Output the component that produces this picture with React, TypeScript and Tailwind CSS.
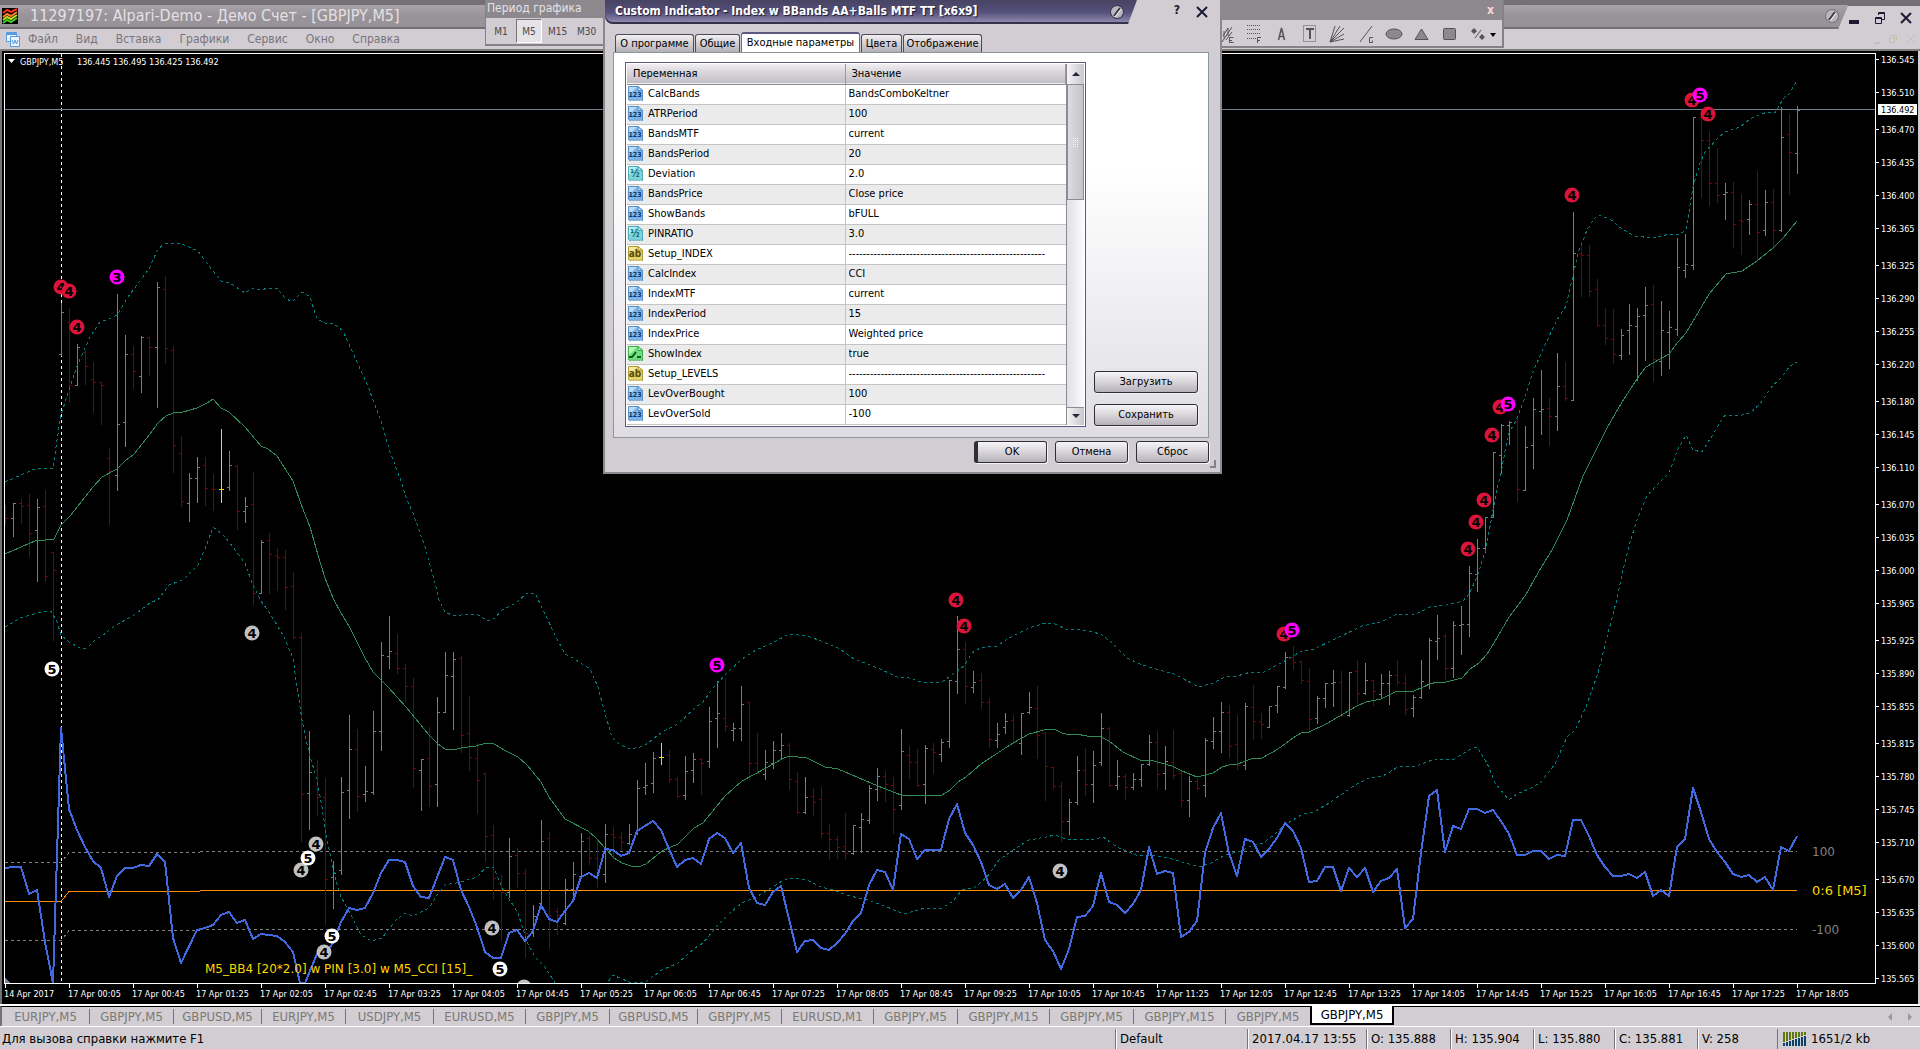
import React from "react";

// [high, low, open, close] for every bar, 8px apart
const BARS = [
  [505, 524, 515, 518], [503, 536, 518, 503], [499, 523, 503, 506], [494, 556, 505, 533], [499, 581, 530, 507],
  [490, 581, 506, 576], [552, 640, 552, 570], [303, 355, 354, 312], [308, 402, 322, 385], [344, 385, 385, 347],
  [350, 384, 352, 366], [362, 412, 379, 382], [382, 424, 382, 385], [448, 524, 458, 471], [294, 490, 475, 424],
  [335, 446, 422, 354], [346, 388, 354, 371], [336, 392, 376, 337], [337, 375, 337, 347], [282, 407, 347, 287],
  [276, 363, 289, 348], [346, 472, 350, 445], [436, 506, 453, 501], [473, 521, 503, 478], [457, 502, 478, 467],
  [457, 505, 465, 488], [474, 510, 489, 489], [429, 502, 489, 489], [451, 490, 487, 465], [465, 529, 466, 511],
  [497, 522, 511, 506], [472, 604, 504, 593], [540, 593, 593, 542], [533, 593, 540, 554], [548, 590, 555, 557],
  [550, 609, 557, 587], [572, 638, 586, 637], [633, 841, 637, 794], [731, 829, 793, 772], [760, 815, 770, 797],
  [778, 924, 797, 879], [861, 908, 877, 873], [777, 874, 870, 792], [715, 818, 790, 749], [729, 811, 749, 796],
  [766, 801, 794, 791], [711, 794, 792, 731], [642, 750, 731, 655], [616, 668, 656, 651], [634, 673, 653, 668],
  [664, 701, 668, 686], [678, 787, 686, 768], [759, 810, 770, 759], [727, 806, 758, 786], [697, 806, 784, 712],
  [652, 712, 712, 675], [652, 729, 676, 659], [656, 752, 658, 735], [696, 770, 733, 757], [743, 813, 758, 780],
  [773, 861, 773, 836], [825, 899, 835, 878], [875, 940, 882, 892], [838, 897, 892, 856], [848, 887, 855, 873],
  [869, 957, 873, 933], [905, 936, 933, 916], [820, 908, 903, 841], [832, 948, 838, 915], [908, 934, 911, 915],
  [879, 924, 923, 889], [862, 900, 889, 874], [833, 877, 876, 841], [836, 864, 838, 858], [839, 887, 858, 874],
  [824, 882, 874, 834], [827, 858, 834, 837], [832, 849, 837, 842], [824, 844, 843, 834], [780, 834, 834, 788],
  [763, 794, 787, 785], [752, 792, 783, 758], [743, 764, 757, 757], [750, 782, 755, 779], [777, 797, 779, 796],
  [756, 799, 795, 771], [753, 782, 770, 759], [758, 794, 759, 763], [707, 767, 761, 721], [681, 747, 718, 713],
  [678, 731, 718, 726], [723, 740, 730, 728], [686, 740, 728, 704], [702, 779, 702, 763], [733, 773, 763, 773],
  [750, 779, 774, 762], [741, 768, 763, 750], [733, 759, 750, 745], [743, 789, 745, 779], [772, 813, 781, 812],
  [777, 813, 812, 797], [788, 815, 796, 802], [787, 837, 799, 833], [824, 859, 833, 839], [836, 858, 839, 847],
  [813, 859, 846, 853], [825, 854, 853, 825], [813, 852, 827, 819], [785, 823, 820, 788], [768, 800, 789, 776],
  [771, 801, 776, 784], [777, 833, 785, 809], [729, 809, 805, 751], [746, 778, 755, 762], [749, 786, 762, 785],
  [745, 803, 784, 748], [743, 773, 749, 752], [739, 761, 754, 742], [680, 747, 741, 680], [616, 693, 681, 649],
  [642, 703, 649, 686], [671, 692, 687, 682], [673, 708, 680, 702], [698, 747, 702, 739], [723, 747, 740, 734],
  [713, 733, 727, 721], [715, 743, 720, 742], [713, 754, 743, 713], [692, 713, 712, 707], [686, 758, 708, 735],
  [732, 800, 733, 766], [767, 788, 767, 786], [782, 841, 786, 821], [799, 834, 821, 802], [756, 804, 802, 770],
  [748, 795, 770, 784], [751, 802, 784, 765], [713, 765, 762, 728], [727, 786, 728, 785], [760, 789, 785, 776],
  [774, 799, 776, 787], [773, 789, 787, 779], [764, 786, 779, 764], [735, 765, 764, 742], [731, 788, 742, 774],
  [746, 789, 773, 761], [730, 778, 762, 775], [771, 806, 773, 800], [776, 816, 800, 781], [778, 789, 781, 788],
  [738, 796, 785, 740], [717, 748, 741, 731], [702, 752, 731, 712], [705, 757, 712, 746], [715, 769, 744, 765],
  [703, 769, 765, 706], [685, 739, 707, 721], [713, 738, 721, 724], [706, 727, 727, 706], [686, 712, 705, 686],
  [652, 688, 687, 657], [646, 669, 657, 662], [661, 683, 661, 680], [668, 732, 681, 719], [696, 723, 718, 698],
  [683, 707, 698, 683], [670, 706, 683, 682], [671, 716, 682, 715], [672, 716, 715, 672], [660, 704, 671, 693],
  [663, 694, 693, 680], [680, 705, 680, 691], [674, 698, 694, 683], [671, 704, 683, 675], [660, 684, 675, 682],
  [675, 714, 683, 709], [695, 716, 708, 697], [660, 698, 697, 681], [638, 688, 684, 640], [615, 659, 641, 638],
  [634, 679, 636, 668], [621, 677, 668, 625], [606, 654, 625, 624], [566, 636, 624, 573], [539, 591, 574, 548],
  [517, 552, 548, 517], [452, 517, 517, 452], [424, 473, 455, 425], [421, 444, 425, 422], [417, 501, 422, 489],
  [426, 490, 490, 447], [398, 468, 445, 409], [370, 434, 411, 409], [398, 445, 408, 416], [353, 430, 416, 386],
  [362, 400, 386, 398], [212, 400, 400, 253], [242, 296, 253, 255], [245, 296, 255, 291], [279, 325, 289, 325],
  [308, 344, 325, 338], [309, 363, 339, 354], [329, 359, 355, 335], [304, 354, 330, 325], [308, 380, 326, 316],
  [287, 360, 315, 305], [285, 381, 304, 359], [301, 375, 361, 330], [311, 368, 332, 327], [238, 335, 329, 267],
  [234, 277, 270, 264], [117, 269, 265, 117], [112, 197, 117, 140], [131, 205, 140, 183], [148, 202, 183, 195],
  [183, 219, 194, 192], [182, 247, 192, 224], [194, 254, 220, 221], [200, 234, 219, 204], [171, 259, 204, 232],
  [190, 235, 230, 202], [189, 248, 202, 230], [107, 231, 230, 137], [114, 194, 134, 152], [106, 173, 153, 110],
];

const PIN_BARS = [27, 82];

const UPPER_BAND =
  "5,482 37,468 53,469 57,440 61,415 69,390 77,366 90,337 100,322 109,319 117,315 128,297 140,281 149,269 157,251 163,244 168,243 182,244 198,251 213,271 221,281 230,283 245,293 252,288 262,290 267,288 277,288 285,298 292,302 302,292 310,297 317,319 327,324 333,323 343,331 353,353 367,384 380,418 390,452 400,478 407,500 413,513 425,547 435,583 439,600 445,612 454,616 469,614 478,615 488,621 495,618 502,610 516,603 527,593 535,593 543,610 555,635 565,654 573,658 590,669 598,687 604,710 612,737 620,745 631,749 644,746 662,732 678,724 695,708 703,702 713,688 727,673 742,659 756,650 772,643 789,634 807,636 821,641 838,648 854,659 878,668 897,677 909,678 921,682 940,683 952,675 964,666 972,653 980,648 997,646 1011,637 1029,628 1046,623 1055,624 1068,630 1078,629 1101,634 1111,642 1127,658 1142,665 1174,674 1199,687 1213,683 1225,677 1237,676 1251,672 1264,672 1281,663 1300,652 1314,649 1333,640 1362,626 1381,622 1397,614 1414,615 1430,607 1447,605 1463,601 1469,594 1477,577 1486,549 1491,521 1496,494 1502,468 1508,435 1517,418 1525,397 1533,372 1543,349 1557,320 1566,306 1572,280 1578,253 1587,230 1593,220 1598,215 1610,219 1622,229 1635,236 1652,238 1670,234 1678,235 1686,230 1693,187 1700,163 1705,152 1717,139 1725,132 1740,127 1750,119 1767,112 1775,113 1783,99 1790,93 1797,80";

const LOWER_BAND =
  "5,627 20,618 37,613 51,611 57,622 61,635 69,642 80,648 87,648 96,639 102,636 114,626 133,616 151,602 158,600 169,585 183,580 198,565 207,544 213,527 222,534 230,543 245,563 252,583 261,601 271,615 284,637 293,658 297,687 302,720 309,753 317,780 322,807 327,840 335,877 341,897 351,915 361,935 372,941 382,938 396,920 405,913 413,916 429,908 437,895 445,885 461,882 477,877 486,867 494,868 502,888 518,913 527,942 535,957 545,967 557,986 605,986 613,975 629,982 644,983 662,970 678,963 695,948 703,943 717,926 731,912 742,903 756,897 768,890 782,881 791,878 807,880 821,887 833,890 850,896 868,900 887,907 904,914 925,908 942,908 952,902 962,890 974,888 987,877 999,860 1013,850 1029,840 1046,837 1055,835 1066,839 1091,840 1103,837 1117,847 1136,855 1152,855 1172,859 1199,867 1211,863 1225,855 1241,851 1253,845 1263,843 1274,835 1286,824 1303,814 1314,812 1326,805 1355,785 1369,778 1383,776 1398,767 1416,766 1435,759 1454,759 1469,750 1477,747 1487,763 1495,783 1509,800 1517,794 1529,789 1541,782 1555,764 1567,737 1575,730 1586,707 1598,673 1607,637 1617,599 1623,570 1630,542 1637,520 1647,496 1657,485 1669,473 1678,449 1686,435 1693,450 1702,452 1710,439 1725,415 1742,415 1750,413 1760,404 1773,385 1780,379 1790,366 1797,362";

const MIDDLE_BAND =
  "5,554 37,540 45,540 54,539 61,525 70,516 93,487 102,477 117,469 125,461 134,454 150,434 158,423 166,416 173,413 183,412 197,408 207,403 213,399 221,408 229,412 245,427 261,446 268,449 277,456 293,481 301,504 310,527 318,555 325,578 333,598 341,613 349,626 365,658 373,672 388,687 406,707 429,735 438,744 445,749 453,750 461,748 476,746 486,743 494,744 506,751 518,757 527,765 541,782 549,797 565,819 588,831 596,838 606,849 614,858 622,863 631,866 638,867 646,864 662,851 678,844 694,828 703,823 725,796 742,781 766,768 782,759 789,756 807,758 825,767 838,769 878,786 901,795 918,796 925,795 942,795 950,790 958,782 966,777 981,764 1013,743 1029,734 1044,730 1054,729 1062,733 1070,735 1076,734 1087,736 1101,737 1109,741 1123,752 1140,760 1150,760 1172,766 1182,771 1197,777 1213,773 1222,767 1229,765 1238,764 1251,759 1262,758 1278,749 1293,738 1301,733 1309,732 1326,724 1357,706 1366,702 1381,699 1397,691 1414,691 1430,684 1437,682 1446,682 1462,678 1470,669 1479,663 1487,654 1494,643 1509,617 1525,596 1542,566 1552,550 1567,520 1583,476 1607,428 1622,402 1637,379 1646,367 1669,354 1678,342 1686,333 1702,306 1709,294 1726,274 1742,271 1757,261 1773,248 1783,238 1797,221";

const CCI =
  "5,868 13,867 21,867 29,894 37,890 45,942 53,983 61,728 69,809 77,830 85,847 93,861 101,868 109,897 117,876 125,868 133,868 141,865 149,866 157,854 165,862 173,938 181,963 197,930 205,928 213,925 221,915 229,912 237,923 245,920 253,939 261,934 277,936 285,942 293,952 300,983 305,983 317,954 325,954 333,943 341,922 349,908 357,910 365,908 373,893 381,873 389,860 397,860 405,862 413,886 421,897 429,898 445,857 453,860 461,890 469,907 477,927 485,952 493,958 501,958 509,933 517,930 525,941 533,931 541,905 549,919 557,922 565,911 573,901 581,877 589,873 597,878 605,849 613,850 621,856 629,853 637,831 653,821 661,830 669,849 677,867 685,860 693,858 701,864 709,839 717,833 725,838 733,853 741,843 749,888 757,903 765,905 773,892 781,886 797,952 805,941 813,940 821,948 829,950 837,943 845,934 853,921 861,913 869,885 877,870 885,872 893,890 901,834 909,839 917,859 925,850 941,850 949,819 957,804 965,833 973,845 981,862 989,885 997,889 1005,884 1013,898 1021,890 1029,877 1037,903 1045,940 1053,951 1061,969 1069,949 1077,917 1085,916 1093,906 1101,873 1109,902 1117,905 1125,913 1133,904 1141,890 1149,847 1157,874 1165,871 1173,873 1181,937 1189,932 1197,921 1205,853 1213,828 1221,813 1229,853 1237,876 1245,839 1253,842 1261,857 1269,849 1277,838 1285,823 1293,831 1301,848 1309,882 1317,881 1325,867 1333,867 1341,891 1349,868 1357,877 1365,868 1373,892 1381,881 1389,878 1397,869 1405,928 1413,919 1421,853 1429,796 1437,790 1445,852 1453,826 1461,829 1469,809 1477,809 1485,813 1493,810 1501,821 1509,834 1517,855 1525,855 1533,851 1541,851 1549,859 1557,855 1565,856 1573,820 1581,820 1589,836 1597,855 1605,867 1613,876 1621,876 1629,874 1637,878 1645,872 1653,896 1661,890 1669,896 1677,847 1685,839 1693,788 1701,812 1709,839 1717,852 1725,862 1733,874 1741,877 1749,875 1757,882 1765,877 1773,890 1781,847 1789,851 1797,836";

const PRICES: [string, number][] = [
  ["136.545", 59], ["136.510", 92], ["136.470", 129], ["136.435", 162], ["136.400", 195], ["136.365", 228],
  ["136.325", 265], ["136.290", 298], ["136.255", 331], ["136.220", 364], ["136.180", 401], ["136.145", 434],
  ["136.110", 467], ["136.070", 504], ["136.035", 537], ["136.000", 570], ["135.965", 603], ["135.925", 640],
  ["135.890", 673], ["135.855", 706], ["135.815", 743], ["135.780", 776], ["135.745", 809], ["135.710", 842],
  ["135.670", 879], ["135.635", 912], ["135.600", 945], ["135.565", 978],
];

const RED = "#dc143c";
const MAGENTA = "#ff00ff";
const SILVER = "#c0c0c0";
const WHITE = "#ffffff";

const BALLS: [number, number, string, string][] = [
  [61, 287, "4", RED], [69, 291, "4", RED], [77, 327, "4", RED], [117, 277, "3", MAGENTA],
  [252, 633, "4", SILVER], [52, 669, "5", WHITE], [316, 844, "4", SILVER], [301, 870, "4", SILVER],
  [308, 858, "5", WHITE], [324, 952, "4", SILVER], [332, 936, "5", WHITE], [492, 928, "4", SILVER],
  [500, 969, "5", WHITE], [524, 987, "4", SILVER], [717, 665, "5", MAGENTA], [956, 600, "4", RED],
  [964, 626, "4", RED], [1060, 871, "4", SILVER], [1284, 634, "4", RED], [1292, 630, "5", MAGENTA],
  [1468, 549, "4", RED], [1476, 522, "4", RED], [1484, 500, "4", RED], [1492, 435, "4", RED],
  [1500, 407, "4", RED], [1508, 404, "5", MAGENTA], [1572, 195, "4", RED], [1692, 100, "4", RED],
  [1700, 95, "5", MAGENTA], [1708, 114, "4", RED],
];

const TIMES = Array.from({ length: 28 }, (_, k) => {
  const m = 5 + 40 * k;
  const hh = String(Math.floor(m / 60)).padStart(2, "0");
  const mm = String(m % 60).padStart(2, "0");
  return { x: 69 + 64 * k, label: `17 Apr ${hh}:${mm}` };
});

function barColor(i: number) {
  if (PIN_BARS.includes(i)) return "#ffd700";
  const [, , open, close] = BARS[i];
  return close < open ? "#708090" : "#800000";
}

function Chart() {
  return (
    <svg
      viewBox="0 51 1920 953"
      className="block w-full bg-black font-['DejaVu_Sans','DejaVu_Sans_Condensed',sans-serif]"
      role="img"
      aria-label="GBPJPY,M5"
    >
      <defs>
        <clipPath id="plot">
          <rect x="5" y="54" width="1870" height="929" />
        </clipPath>
      </defs>

      <rect x="0" y="51" width="2" height="953" fill="#737173" />
      <rect x="1918" y="51" width="2" height="953" fill="#d1cdd2" />

      <g clipPath="url(#plot)" fill="none" shapeRendering="crispEdges">
        {/* period separator and bid line */}
        <path d="M61.5 54V983" stroke="#fff" strokeDasharray="3 3" />
        <path d="M5 109.5H1875" stroke="#708090" />

        {/* index levels */}
        <path d="M5 862.5H61L69 852.5H200M200 851.5H1797" stroke="#808080" strokeDasharray="3 3" />
        <path d="M5 940.5H61L69 930.5H200M200 929.5H1797" stroke="#808080" strokeDasharray="3 3" />
        <path d="M5 901.5H61L69 891.5H200M200 890.5H1797" stroke="#ff8c00" />

        {BARS.map(([high, low, open, close], i) => {
          const x = 5 + i * 8;
          return (
            <path
              key={i}
              d={`M${x + 0.5} ${high}V${low + 1}M${x - 2} ${open + 0.5}H${x}M${x + 1} ${close + 0.5}H${x + 3}`}
              stroke={barColor(i)}
            />
          );
        })}

        <polyline points={UPPER_BAND} stroke="#008080" strokeDasharray="3 3" />
        <polyline points={LOWER_BAND} stroke="#008080" strokeDasharray="3 3" />
        <polyline points={MIDDLE_BAND} stroke="#2e8b57" />
        <polyline points={CCI} stroke="#4169e1" strokeWidth="2" strokeLinejoin="round" />
        <path d="M5 978L10 983H5Z" fill="#708090" />
      </g>

      {/* balls */}
      <g clipPath="url(#plot)" fontSize="13" fontWeight="700" textAnchor="middle">
        {BALLS.map(([x, y, n, color], i) => (
          <g key={i}>
            <circle cx={x} cy={y} r="7.5" fill={color} />
            <text x={x} y={y + 5} fill="#000">
              {n}
            </text>
          </g>
        ))}
      </g>

      {/* frame and axes */}
      <path d="M4.5 983V53.5H1875.5V983.5H4" fill="none" stroke="#fff" shapeRendering="crispEdges" />
      <g fill="#fff" className="font-['DejaVu_Sans_Condensed','DejaVu_Sans',sans-serif] text-[9px]">
        {PRICES.map(([label, y]) => (
          <g key={label}>
            <rect x="1876" y={y} width="3" height="1" />
            <text x="1881" y={y + 4}>
              {label}
            </text>
          </g>
        ))}
        <rect x="1878" y="104" width="39" height="11" />
        <text x="1881" y="113" fill="#000">
          136.492
        </text>
        <rect x="5" y="984" width="1" height="4" />
        <text x="4" y="997">
          14 Apr 2017
        </text>
        {TIMES.map(({ x, label }) => (
          <g key={label}>
            <rect x={x} y="984" width="1" height="4" />
            <text x={x - 1} y="997">
              {label}
            </text>
          </g>
        ))}
        <path d="M8 59H15L11.5 63Z" />
        <text x="20" y="65">
          GBPJPY,M5
        </text>
        <text x="77" y="65">
          136.445 136.495 136.425 136.492
        </text>
      </g>
      <g fontSize="12" fill="#ffd700">
        <text x="205" y="973">
          M5_BB4 [20*2.0] w PIN [3.0] w M5_CCI [15]_
        </text>
        <text x="1812" y="895" fontSize="13">
          0:6 [M5]
        </text>
        <text x="1812" y="856" fill="#808080">
          100
        </text>
        <text x="1812" y="934" fill="#808080">
          -100
        </text>
      </g>
    </svg>
  );
}

function Screw({ dark }: { dark?: boolean }) {
  return (
    <svg viewBox="0 0 16 16" className="h-4 w-4">
      <circle cx="8" cy="8" r="7" fill={dark ? "#3a3550" : "#77737a"} />
      <circle cx="8" cy="8" r="6" fill="#b9b6bd" />
      <path d="M5 12L11 4" stroke="#3a3840" strokeWidth="2" />
      <path d="M6 13L12 5" stroke="#fff" strokeWidth="1" />
    </svg>
  );
}

function TitleBar() {
  return (
    <header className="flex h-[29px] items-start bg-[#d1cdd2]">
      <div className="h-[29px] grow border-b-2 border-[#737073] bg-[#737173] pt-[5px] [clip-path:polygon(0_0,100%_0,100%_5px,calc(100%-10px)_100%,0_100%)]">
        <div className="flex h-[22px] items-center gap-2 bg-gradient-to-b from-[#a8a3a8] via-[#989398] to-[#98939a] pr-2 pl-[2px]">
          <svg viewBox="0 0 16 16" className="h-4 w-4">
            <rect width="16" height="16" fill="#000" />
            <path d="M1 5L5 2L9 4L15 1" stroke="#ff3020" strokeWidth="2" fill="none" />
            <path d="M1 9L5 6L9 8L15 4" stroke="#ff8020" strokeWidth="2" fill="none" />
            <path d="M1 12L5 9L9 11L15 7" stroke="#c0e020" strokeWidth="2" fill="none" />
            <path d="M1 15L5 12L9 14L15 10" stroke="#40d020" strokeWidth="2" fill="none" />
          </svg>
          <h1 className="grow pl-1 text-[16px] leading-5 text-[#e4e0e4]">
            11297197: Alpari-Demo - Демо Счет - [GBPJPY,M5]
          </h1>
          <Screw />
        </div>
      </div>
      <div className="flex h-[29px] w-[72px] items-center justify-between border-t-[6px] border-[#737173] pr-2 pl-[1px]">
        <button aria-label="Свернуть" className="mt-2 h-1 w-[10px] bg-[#1c1a33]" />
        <button aria-label="Восстановить">
          <svg viewBox="0 0 12 14" className="h-[14px] w-3" fill="none" stroke="#1c1a33">
            <path d="M4.5 4V1.5H10.5V8.5H8M4 2.5H11" />
            <path d="M1.5 6.5H7.5V12.5H1.5ZM1 7.5H8" />
          </svg>
        </button>
        <button aria-label="Закрыть">
          <svg viewBox="0 0 12 14" className="h-[14px] w-3" stroke="#1c1a33" strokeWidth="2">
            <path d="M1 2L11 12M11 2L1 12" />
          </svg>
        </button>
      </div>
    </header>
  );
}

const MENU = ["Файл", "Вид", "Вставка", "Графики", "Сервис", "Окно", "Справка"];

function MenuBar() {
  return (
    <nav className="flex h-[22px] items-center border-b-2 border-[#807d7b] bg-[#d1cdd2] pl-[5px]">
      <svg viewBox="0 0 16 16" className="h-4 w-4" fill="#eaf3ff" stroke="#5a9be0">
        <path d="M1.5 1.5H11.5V10.5H1.5Z" />
        <path d="M1 3H12" strokeWidth="2" />
        <path d="M5.5 5.5H14.5V15.5H5.5Z" />
        <path d="M7 9L8.5 13L10 9L11.5 13L13 9" fill="none" />
      </svg>
      <div className="flex gap-[18px] pl-[7px] text-[12px] leading-4 text-[#78747a]">
        {MENU.map((item) => (
          <button key={item}>{item}</button>
        ))}
      </div>
      <div className="ml-auto flex items-center gap-2 pr-1 text-[#c3c1b0]">
        <span className="mt-2 h-[2px] w-[6px] bg-current" />
        <svg viewBox="0 0 10 10" className="h-[10px] w-[10px]" fill="none" stroke="currentColor">
          <path d="M3.5 1.5H8.5V6.5M1.5 3.5H6.5V8.5H1.5Z" />
        </svg>
        <svg viewBox="0 0 10 10" className="h-[10px] w-[10px]" stroke="currentColor">
          <path d="M1 1L9 9M9 1L1 9" />
        </svg>
      </div>
    </nav>
  );
}

function PeriodToolbar() {
  return (
    <section className="absolute top-0 left-[485px] w-[200px] border-r-2 border-b-2 border-l border-[#85818a] bg-[#d1cdd2]">
      <h2 className="h-[18px] bg-[#8d888e] pl-px text-[12px] leading-4 text-[#e6e2e6]">Период графика</h2>
      <div className="flex h-[26px] items-center gap-[2px] pl-[2px] text-[10px] text-[#4a474d]">
        <button className="h-6 w-[26px]">M1</button>
        <button className="h-6 w-[26px] border border-t-[#77737a] border-r-white border-b-white border-l-[#77737a] bg-[#e6e3e7]">
          M5
        </button>
        <button className="h-6 w-[27px]">M15</button>
        <button className="h-6 w-[27px]">M30</button>
      </div>
    </section>
  );
}

function DrawToolbar() {
  return (
    <section className="absolute top-0 left-[1200px] w-[304px] border-r-2 border-b-2 border-[#85818a] bg-[#d1cdd2]">
      <div className="flex h-5 items-center justify-end bg-[#8d888e] pr-2">
        <button aria-label="Закрыть панель" className="text-[12px] leading-4 font-bold text-[#ffd8d0]">
          x
        </button>
      </div>
      <svg viewBox="1200 20 302 26" className="block h-[26px] w-[302px]" fill="none" stroke="#55525a">
        <path d="M1222 42L1232 27M1223 36L1228 28M1226 40L1232 32M1224 31V38M1228 28V36" />
        <path d="M1233.5 37.500H1229.500V42.500H1233.500M1229.500 40.500H1232" />
        <path d="M1247 25.500H1261M1247 29.500H1261M1247 33.500H1261M1247 38.500H1256" strokeDasharray="1 1" />
        <path d="M1257.500 43V37.500H1261M1257.500 40.500H1260" />
        <path d="M1278.500 40L1281.500 28L1284.500 40M1279.500 36.500H1284" strokeWidth="1.5" />
        <rect x="1303.500" y="25.500" width="12" height="16" strokeDasharray="1 1" />
        <path d="M1306 29H1314M1310 29V39" strokeWidth="2" />
        <path d="M1330 42L1344 28M1330 42L1340 26M1330 42L1335 26M1330 42L1344 34M1330 42L1344 39" />
        <path d="M1360 42L1372 26M1373 37.500H1369.500V42.500H1372.500V40.500" />
        <ellipse cx="1394" cy="34" rx="8" ry="5" fill="#8d888e" />
        <path d="M1415 39.500H1428L1421.500 29Z" fill="#8d888e" />
        <rect x="1443.500" y="28.500" width="12" height="11" rx="1" fill="#8d888e" />
        <path
          d="M1471 31L1474 28L1477 31L1474 34ZM1479 37L1482 34L1485 37L1482 40Z"
          fill="#55525a"
          stroke="none"
        />
        <path d="M1475 38L1481 30" />
        <path d="M1490 33H1496L1493 37Z" fill="#000" stroke="none" />
      </svg>
    </section>
  );
}

type Kind = "int" | "float" | "text" | "bool";

const DASHES = "-".repeat(55);

const PARAMS: { name: string; value: string; kind: Kind }[] = [
  { name: "CalcBands", value: "BandsComboKeltner", kind: "int" },
  { name: "ATRPeriod", value: "100", kind: "int" },
  { name: "BandsMTF", value: "current", kind: "int" },
  { name: "BandsPeriod", value: "20", kind: "int" },
  { name: "Deviation", value: "2.0", kind: "float" },
  { name: "BandsPrice", value: "Close price", kind: "int" },
  { name: "ShowBands", value: "bFULL", kind: "int" },
  { name: "PINRATIO", value: "3.0", kind: "float" },
  { name: "Setup_INDEX", value: DASHES, kind: "text" },
  { name: "CalcIndex", value: "CCI", kind: "int" },
  { name: "IndexMTF", value: "current", kind: "int" },
  { name: "IndexPeriod", value: "15", kind: "int" },
  { name: "IndexPrice", value: "Weighted price", kind: "int" },
  { name: "ShowIndex", value: "true", kind: "bool" },
  { name: "Setup_LEVELS", value: DASHES, kind: "text" },
  { name: "LevOverBought", value: "100", kind: "int" },
  { name: "LevOverSold", value: "-100", kind: "int" },
];

const KIND_STYLE: Record<Kind, { fill: string; light: string; stroke: string; ink: string; label: string }> = {
  int: { fill: "#7fb5e6", light: "#b8dcfa", stroke: "#5a93c8", ink: "#0b3566", label: "123" },
  float: { fill: "#7fd3dc", light: "#b5f0f2", stroke: "#4fa9b8", ink: "#0b6a78", label: "½" },
  text: { fill: "#e6d56a", light: "#f5eba0", stroke: "#b09a38", ink: "#5c4a08", label: "ab" },
  bool: { fill: "#6fe07f", light: "#b5f8b8", stroke: "#3fae52", ink: "#0c5a1c", label: "" },
};

function KindIcon({ kind }: { kind: Kind }) {
  const s = KIND_STYLE[kind];
  return (
    <svg viewBox="0 0 16 16" className="h-4 w-4 shrink-0">
      <path
        d="M.5 .5H10L14.500 4V15L13 13.500L11.500 15L10 13.500L8.500 15L7 13.500L5.500 15L4 13.500L2.500 15L.5 13.500Z"
        fill={s.fill}
        stroke={s.stroke}
      />
      <path d="M1 1H9L2 8H1Z" fill={s.light} />
      <path d="M10 .5V4.500H14.500Z" fill={s.light} stroke={s.stroke} />
      {kind === "bool" ? (
        <path d="M1 11H4L8 6M9 11H13" stroke={s.ink} strokeWidth="2" fill="none" />
      ) : (
        <text x="7" y="11" textAnchor="middle" fontSize={kind === "int" ? 7 : 10} fontWeight="700" fill={s.ink}>
          {s.label}
        </text>
      )}
    </svg>
  );
}

const BTN =
  "h-[22px] rounded-[3px] border border-[#2f2d3a] bg-gradient-to-b from-[#f6f5f7] via-[#d8d5da] to-[#b5b1ba] text-[11px] leading-4 text-black shadow-[1px_1px_0_#f4f2f5]";
const TAB =
  "h-[18px] rounded-t-[3px] border border-b-0 border-[#4c4a58] bg-gradient-to-b from-[#f2f0f3] to-[#b4b0b7] text-[11px] leading-4";

function ParamTable() {
  return (
    <div className="flex w-[461px] border border-[#5c5880] bg-white p-px">
      <table className="grow table-fixed border-collapse text-left text-[11px] leading-4">
        <thead>
          <tr className="h-5 border-b border-[#8e8a92] bg-gradient-to-b from-[#f0eef1] via-[#d6d3d8] to-[#c2bec6]">
            <th className="w-[218px] border-r border-[#9a969e] p-0 pl-[6px] font-normal">Переменная</th>
            <th className="border-r border-[#9a969e] p-0 pl-[6px] font-normal">Значение</th>
          </tr>
        </thead>
        <tbody>
          {PARAMS.map((p) => (
            <tr key={p.name} className="h-5 border-b border-[#c4c4c4] even:bg-[#ebebeb]">
              <td className="border-r border-[#c4c4c4] p-0">
                <div className="flex items-center gap-1 pl-px">
                  <KindIcon kind={p.kind} />
                  {p.name}
                </div>
              </td>
              <td className="p-0 pl-[3px]">
                <div className="w-[200px] overflow-hidden whitespace-nowrap">{p.value}</div>
              </td>
            </tr>
          ))}
        </tbody>
      </table>
      <div className="flex w-[18px] flex-col border-l border-[#8e8a92] bg-gradient-to-r from-[#e2e0e4] to-[#fbfafc]">
        <button aria-label="Вверх" className="flex h-5 items-center justify-center bg-gradient-to-r from-[#f4f3f5] to-[#c9c6cd]">
          <svg viewBox="0 0 8 4" className="h-1 w-2">
            <path d="M0 4L4 0L8 4Z" fill="#26243a" />
          </svg>
        </button>
        <div className="flex h-[116px] items-center justify-center border border-[#8e8a92] bg-gradient-to-r from-[#dddbe0] to-[#c6c3ca]">
          <svg viewBox="0 0 6 9" className="h-[9px] w-[6px]" stroke="#f6f5f7">
            <path d="M0 .5H6M0 2.500H6M0 4.500H6M0 6.500H6M0 8.500H6" strokeDasharray="1 1" />
          </svg>
        </div>
        <button
          aria-label="Вниз"
          className="mt-auto flex h-[18px] items-center justify-center border-t border-[#8e8a92] bg-gradient-to-r from-[#f4f3f5] to-[#c9c6cd]"
        >
          <svg viewBox="0 0 8 4" className="h-1 w-2">
            <path d="M0 0L4 4L8 0Z" fill="#26243a" />
          </svg>
        </button>
      </div>
    </div>
  );
}

function IndicatorDialog() {
  return (
    <section
      role="dialog"
      aria-label="Custom Indicator"
      className="absolute top-0 left-[603px] w-[619px] border-r-2 border-b-2 border-l-2 border-[#8b888f] bg-[#d1cdd2]"
    >
      <div className="flex h-6 items-start">
        <div className="flex h-6 w-[532px] items-start justify-between rounded-bl-lg bg-gradient-to-b from-[#474362] via-[#55507a] to-[#9a94b8] pr-3 pl-[10px] shadow-[inset_0_-2px_0_#35314a] [clip-path:polygon(0_0,100%_0,calc(100%-9px)_100%,0_100%)]">
          <h2 className="text-[12px] leading-[22px] font-bold text-white [text-shadow:1px_1px_1px_#1c1a33]">
            Custom Indicator - Index w BBands AA+Balls MTF TT [x6x9]
          </h2>
          <span className="mt-1">
            <Screw dark />
          </span>
        </div>
        <button aria-label="Справка" className="ml-auto text-[12px] leading-5 font-bold text-[#1c1a33]">
          ?
        </button>
        <button aria-label="Закрыть" className="mt-1 mr-3 ml-4">
          <svg viewBox="0 0 12 14" className="h-[14px] w-3" stroke="#1c1a33" strokeWidth="2">
            <path d="M1 3L11 13M11 3L1 13" />
          </svg>
        </button>
      </div>

      <div className="pt-2 pr-[11px] pl-2">
        <div className="flex items-end gap-px pl-[2px]">
          <button className={`${TAB} w-[79px]`}>О программе</button>
          <button className={`${TAB} w-[45px]`}>Общие</button>
          <button className="h-5 w-[119px] rounded-t-[3px] border border-t-2 border-b-0 border-[#6d6a78] border-t-[#5c5880] bg-white text-[11px] leading-4">
            Входные параметры
          </button>
          <button className={`${TAB} w-[41px]`}>Цвета</button>
          <button className={`${TAB} w-[79px]`}>Отображение</button>
        </div>
        <div className="flex items-end gap-2 border border-[#8b9896] bg-gradient-to-b from-white from-30% to-[#dfdde3] pt-[9px] pb-[10px] pl-[11px]">
          <ParamTable />
          <div className="flex flex-col gap-[11px] pb-px">
            <button className={`${BTN} w-[104px]`}>Загрузить</button>
            <button className={`${BTN} w-[104px]`}>Сохранить</button>
          </div>
        </div>
      </div>
      <div className="flex justify-end gap-2 pt-[3px] pr-[11px] pb-[9px]">
        <button className={`${BTN} w-[73px] border-l-4`}>OK</button>
        <button className={`${BTN} w-[73px]`}>Отмена</button>
        <button className={`${BTN} w-[73px]`}>Сброс</button>
      </div>
      <span className="absolute right-1 bottom-1 h-2 w-[6px] border-r-2 border-b-2 border-[#85818a]" />
    </section>
  );
}

const CHART_TABS: [string, string][] = [
  ["EURJPY,M5", "w-[88px]"],
  ["GBPJPY,M5", "w-[84px]"],
  ["GBPUSD,M5", "w-[88px]"],
  ["EURJPY,M5", "w-[84px]"],
  ["USDJPY,M5", "w-[88px]"],
  ["EURUSD,M5", "w-[92px]"],
  ["GBPJPY,M5", "w-[84px]"],
  ["GBPUSD,M5", "w-[88px]"],
  ["GBPJPY,M5", "w-[84px]"],
  ["EURUSD,M1", "w-[92px]"],
  ["GBPJPY,M5", "w-[84px]"],
  ["GBPJPY,M15", "w-[92px]"],
  ["GBPJPY,M5", "w-[84px]"],
  ["GBPJPY,M15", "w-[92px]"],
];

function ChartTabs() {
  return (
    <div className="border-t-2 border-b border-white bg-[#d1cdd2]">
      <div className="flex h-5 border-t border-black border-l-2 border-l-[#737173] text-[13px] leading-4 text-[#7c7874]">
        {CHART_TABS.map(([label, width], i) => (
          <button key={i} className={`${width} my-[2px] border-r border-[#77746f]`}>
            {label}
          </button>
        ))}
        <button className="w-[84px]">GBPJPY,M5</button>
        <button className="-mt-px h-[19px] w-[84px] border-x-2 border-b-2 border-black bg-white text-black">GBPJPY,M5</button>
        <div className="ml-auto flex items-center gap-4 pr-2 text-[#9a979c]">
          <svg viewBox="0 0 4 8" className="h-2 w-1" fill="currentColor">
            <path d="M4 0V8L0 4Z" />
          </svg>
          <svg viewBox="0 0 4 8" className="h-2 w-1" fill="currentColor">
            <path d="M0 0V8L4 4Z" />
          </svg>
        </div>
      </div>
    </div>
  );
}

const STATUS: [string, string][] = [
  ["Default", "w-[132px]"],
  ["2017.04.17 13:55", "w-[119px]"],
  ["O: 135.888", "w-[84px]"],
  ["H: 135.904", "w-[83px]"],
  ["L: 135.880", "w-[81px]"],
  ["C: 135.881", "w-[83px]"],
  ["V: 258", "w-[80px]"],
];

function StatusBar() {
  return (
    <footer className="flex h-[22px] items-end bg-[#d1cdd2] text-[13px] leading-5 text-black">
      <p className="grow pl-[2px]">Для вызова справки нажмите F1</p>
      {STATUS.map(([label, width]) => (
        <div key={label} className={`${width} h-5 border-l border-[#77747a] pl-1 shadow-[inset_1px_0_0_#fff]`}>
          {label}
        </div>
      ))}
      <div className="flex h-5 w-[143px] items-center gap-1 border-l border-[#77747a] pl-[5px]">
        <svg viewBox="0 0 24 14" className="h-[14px] w-6" strokeWidth="2">
          <path d="M1 0V10M4 0V9M7 0V8M10 0V7M13 0V6M16 0V5M19 0V4M22 0V3" stroke="#5f7a10" />
          <path d="M1 14V11M4 14V10M7 14V9M10 14V8M13 14V7M16 14V6M19 14V5M22 14V4" stroke="#0d4266" />
        </svg>
        1651/2 kb
      </div>
    </footer>
  );
}

export default function App() {
  return (
    <main className="relative overflow-hidden bg-[#d1cdd2] font-['DejaVu_Sans_Condensed','DejaVu_Sans',sans-serif]">
      <TitleBar />
      <MenuBar />
      <Chart />
      <ChartTabs />
      <StatusBar />
      <PeriodToolbar />
      <DrawToolbar />
      <IndicatorDialog />
    </main>
  );
}
